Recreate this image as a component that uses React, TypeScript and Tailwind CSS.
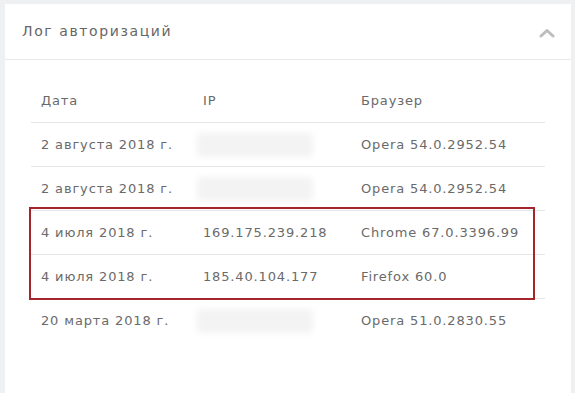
import React from 'react';

type Row = { date: string; ip: string | null; browser: string };

const rows: Row[] = [
  { date: '2 августа 2018 г.', ip: null, browser: 'Opera 54.0.2952.54' },
  { date: '2 августа 2018 г.', ip: null, browser: 'Opera 54.0.2952.54' },
  { date: '4 июля 2018 г.', ip: '169.175.239.218', browser: 'Chrome 67.0.3396.99' },
  { date: '4 июля 2018 г.', ip: '185.40.104.177', browser: 'Firefox 60.0' },
  { date: '20 марта 2018 г.', ip: null, browser: 'Opera 51.0.2830.55' },
];

const HiddenIp = () => (
  <div className="h-[24px] w-[116px] -ml-[6px] rounded-sm bg-[#f3f3f3] blur-[3px]" />
);

const TableRow = ({ row, last }: { row: Row; last?: boolean }) => (
  <div className={`flex h-[44px] items-center ${last ? '' : 'border-b border-[#e6e6e6]'}`}>
    <div className="w-[172px] pl-[10px]">{row.date}</div>
    <div className="w-[158px]">{row.ip ? row.ip : <HiddenIp />}</div>
    <div className="flex-1">{row.browser}</div>
  </div>
);

export default function App() {
  return (
    <div className="h-[393px] w-[575px] overflow-hidden bg-[#eef0f2] pl-[5px] pr-[4px] pt-[4px]">
      <div
        className="h-full bg-white text-[13px] tracking-[0.85px] text-[#6a6a6a]"
        style={{ fontFamily: '"DejaVu Sans", "Liberation Sans", sans-serif' }}
      >
        <div className="flex h-[56px] items-center justify-between border-b border-[#e8e8e8] pl-[17px] pr-[16px]">
          <span className="text-[14px] tracking-[1.6px] text-[#666]">Лог авторизаций</span>
          <svg width="16" height="10" viewBox="0 0 16 10" className="mt-[2px]">
            <path d="M2 8 L8 2.5 L14 8" fill="none" stroke="#bdbdbd" strokeWidth="3" strokeLinecap="round" strokeLinejoin="round" />
          </svg>
        </div>
        <div className="ml-[26px] mr-[26px] mt-[19px]">
          <div className="flex h-[44px] items-center border-b border-[#e6e6e6]">
            <div className="w-[172px] pl-[10px]">Дата</div>
            <div className="w-[158px]">IP</div>
            <div className="flex-1">Браузер</div>
          </div>
          <TableRow row={rows[0]} />
          <TableRow row={rows[1]} />
          <div className="relative">
            <div className="pointer-events-none absolute -left-[2px] right-[10px] -top-[4px] -bottom-[1px] border-2 border-[#a4262c]" />
            <TableRow row={rows[2]} />
            <TableRow row={rows[3]} />
          </div>
          <TableRow row={rows[4]} last />
        </div>
      </div>
    </div>
  );
}
